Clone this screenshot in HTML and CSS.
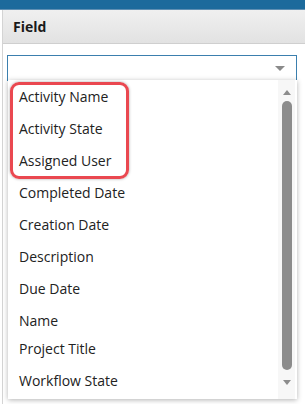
FILE: index.html
```html
<!DOCTYPE html>
<html lang="en">
<head>
    <meta charset="UTF-8">
    <title>Field Picker</title>
    <link rel="stylesheet" href="styles.css">
</head>
<body>

<div class="topbar"></div>

<div class="panel">
    <div class="panel-header">Field</div>

    <div class="field-area">
        <div class="select-box">
            <span class="select-arrow"></span>
        </div>

        <!-- Dropdown menu -->
        <div class="dropdown">
            <ul class="option-list">
                <li>Activity Name</li>
                <li>Activity State</li>
                <li>Assigned User</li>
                <li>Completed Date</li>
                <li>Creation Date</li>
                <li>Description</li>
                <li>Due Date</li>
                <li class="short">Name</li>
                <li>Project Title</li>
                <li>Workflow State</li>
            </ul>
            <div class="scrollbar">
                <span class="scroll-up"></span>
                <div class="scroll-thumb"></div>
                <span class="scroll-down"></span>
            </div>
        </div>

        <div class="highlight"></div>
    </div>
</div>

</body>
</html>
```

FILE: styles.css
```css
body {
    font-family: 'Open Sans', 'Noto Sans', sans-serif;
    margin: 0;
    padding: 0;
    width: 305px;
    height: 404px;
    overflow: hidden;
    background-color: white;
    color: #222;
}

.topbar {
    height: 9px;
    background-color: #1c6a9c;
    border-bottom: 1px solid #5f8fb3;
}

.panel {
    margin-left: 2px;
    border-left: 1px solid #d4d4d4;
    height: 394px;
}

.panel-header {
    height: 33px;
    line-height: 33px;
    padding-left: 10px;
    font-size: 14px;
    font-weight: 700;
    color: #1a1a1a;
    background: linear-gradient(#f0f0f0, #e2e2e2);
    border-bottom: 1px solid #cfcfcf;
}

.field-area {
    position: relative;
    padding: 11px 0 0 4px;
}

.select-box {
    position: relative;
    width: 288px;
    height: 24px;
    border: 1px solid #3b7fae;
    background-color: white;
}

.select-arrow {
    position: absolute;
    right: 11px;
    top: 10px;
    border-left: 5px solid transparent;
    border-right: 5px solid transparent;
    border-top: 5px solid #8a8a8a;
}

/* Dropdown list */
.dropdown {
    position: absolute;
    left: 5px;
    top: 36px;
    width: 289px;
    height: 319px;
    background-color: white;
    box-shadow: 0 1px 5px rgba(0, 0, 0, 0.3);
    display: flex;
}

.option-list {
    list-style: none;
    margin: 0;
    padding: 0;
    flex: 1;
    font-size: 14px;
}

.option-list li {
    height: 32px;
    line-height: 32px;
    padding-left: 11px;
    margin-top: 0;
}

.option-list li:first-child {
    margin-top: 1px;
}

.option-list li.short {
    height: 28px;
    line-height: 32px;
}

.scrollbar {
    width: 17px;
    margin-right: 2px;
    background-color: #f7f7f7;
    display: flex;
    flex-direction: column;
    align-items: center;
    padding-top: 10px;
}

.scroll-up {
    border-left: 4px solid transparent;
    border-right: 4px solid transparent;
    border-bottom: 5px solid #8c8c8c;
}

.scroll-thumb {
    width: 10px;
    height: 269px;
    margin-top: 6px;
    border-radius: 5px;
    background-color: #8c8c8c;
}

.scroll-down {
    margin-top: 10px;
    border-left: 4px solid transparent;
    border-right: 4px solid transparent;
    border-top: 5px solid #8c8c8c;
}

/* Red highlight around first three options */
.highlight {
    position: absolute;
    left: 7px;
    top: 38px;
    width: 113px;
    height: 91px;
    border: 3px solid #ea4850;
    border-radius: 9px;
    box-shadow: 0 0 3px rgba(0, 0, 0, 0.35);
}
```
